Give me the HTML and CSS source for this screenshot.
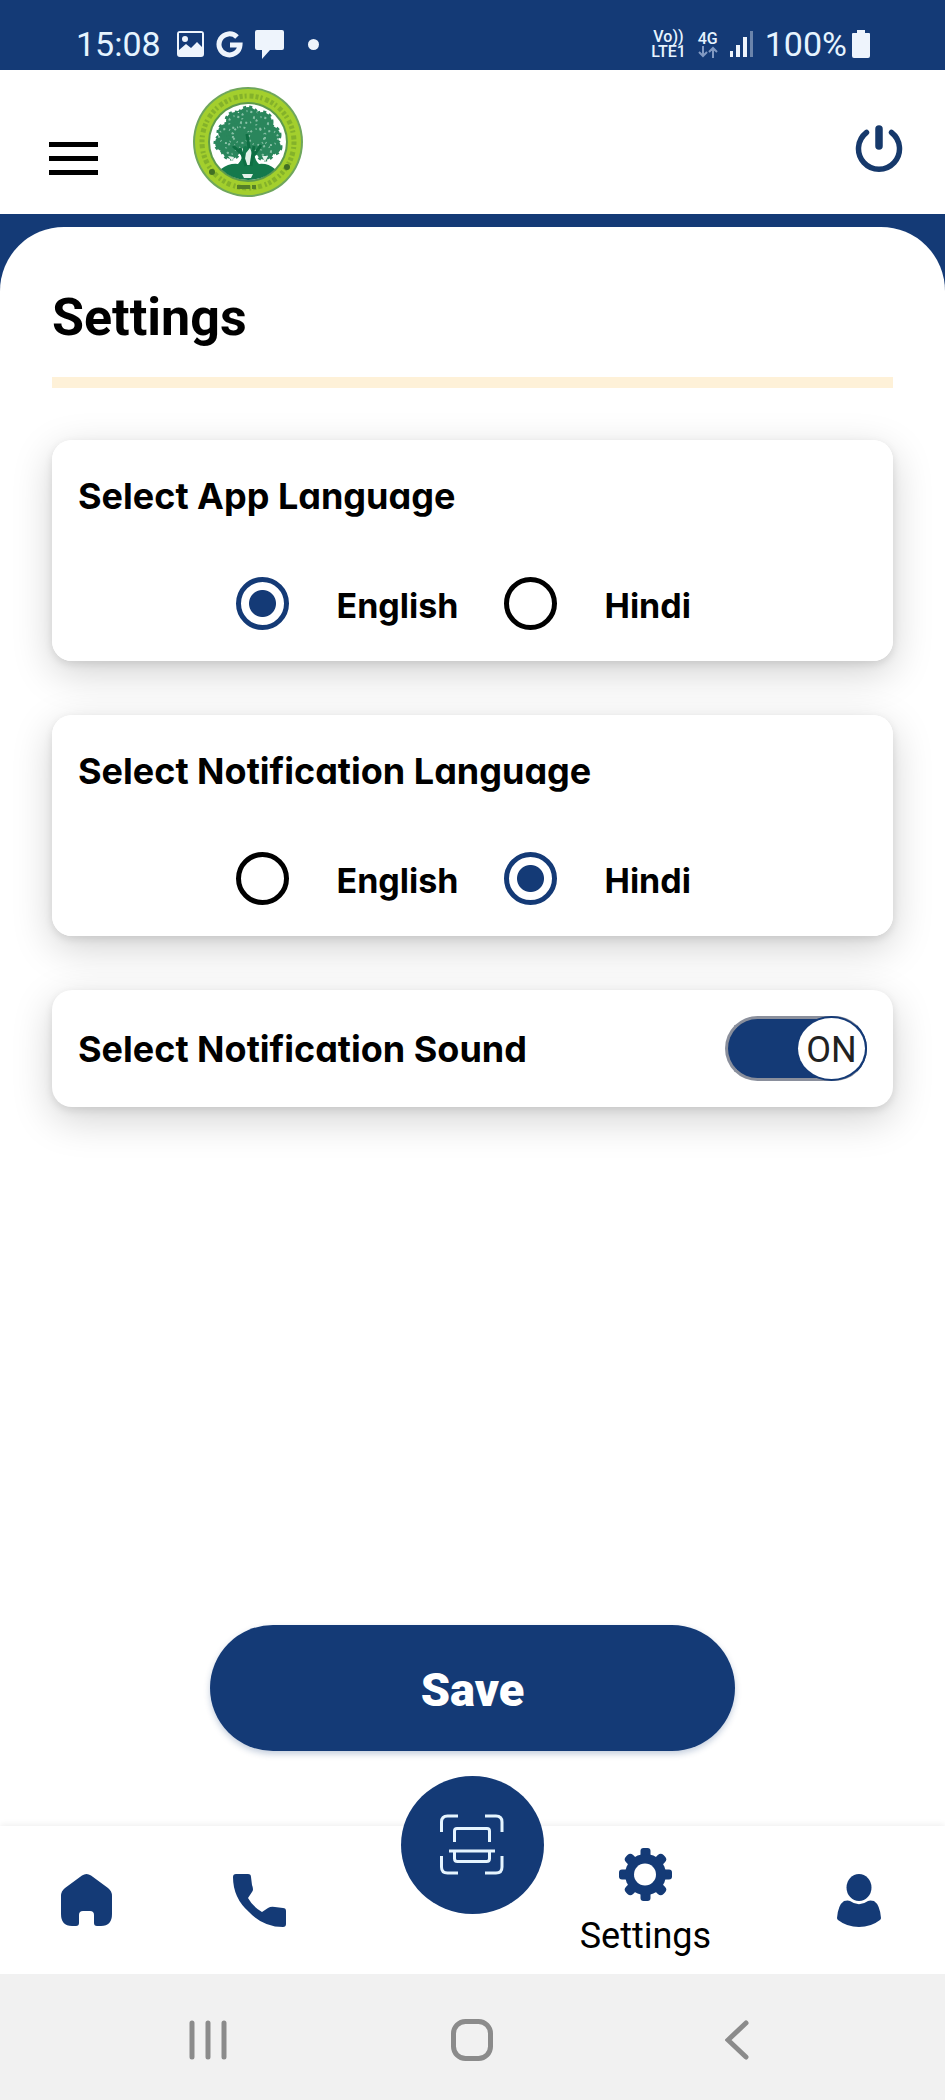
FILE: index.html
```html
<!DOCTYPE html>
<html lang="en">
<head>
    <meta charset="UTF-8">
    <meta name="viewport" content="width=device-width, initial-scale=1.0">
    <title>Settings</title>
    <link rel="stylesheet" href="styles.css">
</head>
<body>
    <div class="status-bar">
        <span class="clock">15:08</span>
        <svg class="status-icon" width="27" height="26" viewBox="0 0 27 26">
            <path fill-rule="evenodd" d="M3 0h21a3 3 0 0 1 3 3v20a3 3 0 0 1-3 3H3a3 3 0 0 1-3-3V3a3 3 0 0 1 3-3zM2 2v17l7-6 5 4 6-6 5 5V2zM8 5a3 3 0 1 1 0 6 3 3 0 0 1 0-6z"/>
        </svg>
        <svg class="status-icon" width="27" height="27" viewBox="0 0 27 27">
            <path d="M21 6A10.500 10.500 0 1 0 24 14H14" fill="none" stroke="#eef4fc" stroke-width="5"/>
        </svg>
        <svg class="status-icon" width="29" height="29" viewBox="0 0 29 29">
            <path d="M2 0h25a2 2 0 0 1 2 2v16a2 2 0 0 1-2 2H15l-8 9v-9H2a2 2 0 0 1-2-2V2a2 2 0 0 1 2-2z"/>
        </svg>
        <span class="more-dot"></span>
        <span class="network"><span>Vo))</span><span>LTE1</span></span>
        <span class="network">
            <span>4G</span>
            <svg width="20" height="12" viewBox="0 0 20 12">
                <path d="M5 0v10M1 6l4 4 4-4M15 12V2M11 6l4-4 4 4" fill="none" stroke="#8199c2" stroke-width="2"/>
            </svg>
        </span>
        <svg class="status-icon" width="23" height="26" viewBox="0 0 23 26">
            <path d="M0 20h3v6H0zM6 14h4v12H6zM13 6h4v20h-4z"/>
            <path d="M20 0h3v26h-3z" opacity=".4"/>
        </svg>
        <span class="battery">
            <span>100%</span>
            <svg class="status-icon" width="18" height="28" viewBox="0 0 18 28">
                <path d="M5 0h8v3h4a1 1 0 0 1 1 1v22a2 2 0 0 1-2 2H2a2 2 0 0 1-2-2V4a1 1 0 0 1 1-1h4z"/>
            </svg>
        </span>
    </div>

    <header class="app-header">
        <button class="menu-button" type="button" aria-label="Menu">
            <span></span>
            <span></span>
            <span></span>
        </button>
        <svg class="logo" width="112" height="112" viewBox="0 0 112 112">
            <circle cx="56" cy="56" r="55" fill="#6fa65c"/>
            <circle cx="56" cy="56" r="53" fill="#a3cf2d"/>
            <circle cx="56" cy="56" r="46" fill="none" stroke="#6f9f28" stroke-width="5" stroke-dasharray="3 2 2 3 4 2" opacity=".6"/>
            <circle cx="56" cy="56" r="40" fill="#5d9a4c"/>
            <circle cx="56" cy="56" r="38" fill="#fff"/>
            <path d="M29 83q8-6 17-5 5-4 5-18h10q1 14 6 18 9-1 16 5-11 11-27 11t-27-11z" fill="#14794c"/>
            <g fill="#2a865c" stroke="#2a865c" stroke-width="3" stroke-dasharray="3 3">
                <circle cx="56" cy="31" r="10"/>
                <circle cx="43" cy="35" r="9"/>
                <circle cx="70" cy="36" r="10"/>
                <circle cx="34" cy="46" r="8"/>
                <circle cx="79" cy="49" r="9"/>
                <circle cx="49" cy="48" r="13"/>
                <circle cx="66" cy="51" r="13"/>
                <circle cx="31" cy="57" r="8"/>
                <circle cx="82" cy="61" r="7"/>
                <circle cx="39" cy="64" r="9"/>
                <circle cx="73" cy="65" r="9"/>
            </g>
            <g fill="none" stroke="#9fcfb8" stroke-width="2" stroke-dasharray="2 4 1 3" opacity=".8">
                <circle cx="56" cy="31" r="6"/>
                <circle cx="43" cy="36" r="6"/>
                <circle cx="70" cy="37" r="6"/>
                <circle cx="34" cy="50" r="7"/>
                <circle cx="79" cy="52" r="7"/>
                <circle cx="49" cy="49" r="8"/>
                <circle cx="65" cy="51" r="8"/>
                <circle cx="39" cy="63" r="5"/>
                <circle cx="74" cy="65" r="5"/>
            </g>
            <path d="M52 79l2-12 4-5 3 8-2 9zM50 88h11l-2 4h-7zM36 70l4 5 2-4M70 70l3 6 3-6" fill="#e3f1e9"/>
            <path d="M54 80l-6-18M59 80l3-20M60 72l9-13M52 70l-11-10M57 62l-2-14" stroke="#0e6e43" stroke-width="3" fill="none"/>
            <circle cx="20" cy="86" r="3" fill="#416f24"/>
            <circle cx="95" cy="81" r="3" fill="#416f24"/>
            <path d="M45 101h13M60 101h4" stroke="#557f28" stroke-width="4"/>
        </svg>
        <button class="power-button" type="button" aria-label="Log out">
            <svg width="48" height="48" viewBox="0 0 48 48">
                <path d="M11.500 8.500A20.500 20.500 0 1 0 36.500 8.500" fill="none" stroke="#16396b" stroke-width="5.500" stroke-linecap="round"/>
                <path d="M24 5v17" stroke="#16396b" stroke-width="7.500" stroke-linecap="round"/>
            </svg>
        </button>
    </header>

    <div class="page">
        <main class="panel">
            <h1>Settings</h1>

            <form class="settings-form">
                <fieldset class="card">
                    <legend>Select App Language</legend>
                    <div class="options">
                        <input type="radio" id="appEnglish" name="appLanguage" checked>
                        <label for="appEnglish">English</label>
                        <input type="radio" id="appHindi" name="appLanguage">
                        <label for="appHindi">Hindi</label>
                    </div>
                </fieldset>

                <fieldset class="card">
                    <legend>Select Notification Language</legend>
                    <div class="options">
                        <input type="radio" id="notifEnglish" name="notifLanguage">
                        <label for="notifEnglish">English</label>
                        <input type="radio" id="notifHindi" name="notifLanguage" checked>
                        <label for="notifHindi">Hindi</label>
                    </div>
                </fieldset>

                <div class="card sound-card">
                    <label for="sound">Select Notification Sound</label>
                    <span class="switch">
                        <input type="checkbox" id="sound" checked>
                        <span class="knob">ON</span>
                    </span>
                </div>

                <button class="save-button" type="submit">Save</button>
            </form>
        </main>
    </div>

    <nav class="tab-bar">
        <a class="tab" href="#home" aria-label="Home">
            <svg width="53" height="53" viewBox="0 0 53 53">
                <path d="M22 1.500q4.500-3 9 0L48 14q4 3 4 8v18q0 12-11 12h-4q-3 0-3-3v-8q0-4-4-4h-7q-4 0-4 4v8q0 3-3 3h-4Q1 52 1 40V22q0-5 4-8z"/>
            </svg>
        </a>
        <a class="tab" href="#call" aria-label="Call">
            <svg width="53" height="53" viewBox="0 0 53 53">
                <path d="M3 0h12q3 0 3 3l1 8q2 5 0 7l-4 6q5 9 14 14l6-4q3-2 7-1l8 1q3 0 3 3v13q0 3-3 3Q30 53 16 38 0 24 0 3q0-3 3-3z"/>
            </svg>
        </a>
        <a class="tab scan-tab" href="#scan" aria-label="Scan">
            <span class="scan-circle">
                <svg width="64" height="62" viewBox="0 0 64 62">
                    <path d="M1.500 18V8q0-6 6-6H18M45 2h11q6 0 6 6v10M62 42v11q0 6-6 6H45M18 59H7.500q-6 0-6-6V42M14.500 28V17q0-2.500 2.500-2.500h30q2.500 0 2.500 2.500v11M9 37h46M14.500 37v7.500q0 3 3 3h29q3 0 3-3V37" fill="none" stroke="#e6f5ff" stroke-width="3"/>
                </svg>
            </span>
        </a>
        <a class="tab active" href="#settings">
            <svg width="53" height="53" viewBox="0 0 53 53">
                <rect x="21.500" y="0" width="10" height="53" rx="3"/>
                <rect x="0" y="21.500" width="53" height="10" rx="3"/>
                <rect x="21.500" y="0" width="10" height="53" rx="4" transform="rotate(45 26.500 26.500)"/>
                <rect x="21.500" y="0" width="10" height="53" rx="4" transform="rotate(-45 26.500 26.500)"/>
                <circle cx="26.500" cy="26.500" r="20.500"/>
                <circle cx="26" cy="26.500" r="11" fill="#fff"/>
            </svg>
            <span>Settings</span>
        </a>
        <a class="tab profile-tab" href="#profile" aria-label="Profile">
            <svg width="44" height="53" viewBox="0 0 44 53">
                <ellipse cx="22" cy="13.500" rx="12.500" ry="13.500"/>
                <path d="M7 27q4-1 6 0 9 6.500 18 0 2-1 6 0 6 4 7 17 0 1-1 2-9 7-21 7T1 46q-1-1-1-2Q1 31 7 27z"/>
            </svg>
        </a>
    </nav>

    <div class="system-bar">
        <button type="button" aria-label="Recent apps">
            <svg width="40" height="40" viewBox="0 0 40 40">
                <path d="M4 3v34M20 3v34M36 3v34"/>
            </svg>
        </button>
        <button type="button" aria-label="Home screen">
            <svg width="42" height="42" viewBox="0 0 42 42">
                <rect x="2.500" y="2.500" width="37" height="37" rx="12"/>
            </svg>
        </button>
        <button type="button" aria-label="Back">
            <svg width="24" height="40" viewBox="0 0 24 40">
                <path d="M21 3L3 20l18 17"/>
            </svg>
        </button>
    </div>
</body>
</html>
```
FILE: styles.css
```css
* {
    box-sizing: border-box;
}

body {
    font-family: Roboto, sans-serif;
    color: #000;
    background: #fff;
    margin: 0;
    min-height: 100vh;
    display: flex;
    flex-direction: column;
}

button {
    font-family: inherit;
    background: none;
    border: none;
    padding: 0;
    cursor: pointer;
}

svg {
    display: block;
}

/* status bar */

.status-bar {
    display: flex;
    align-items: center;
    gap: 12px;
    height: 70px;
    padding: 18px 75px 0 76px;
    background: #143a76;
    color: #e6f4ff;
    font-size: 34px;
    line-height: 36px;
}

.clock {
    margin-right: 4px;
}

.status-icon {
    fill: #eef4fc;
}

.more-dot {
    width: 11px;
    height: 11px;
    margin: 0 auto 0 12px;
    border-radius: 50%;
    background: #eef4fc;
}

.network {
    display: flex;
    flex-direction: column;
    align-items: center;
    font-size: 16px;
    font-weight: 500;
    line-height: 15px;
}

.battery {
    display: flex;
    align-items: center;
    gap: 5px;
}

/* header */

.app-header {
    display: flex;
    align-items: center;
    height: 144px;
    padding: 0 42px 0 49px;
    background: #fff;
}

.menu-button {
    display: flex;
    flex-direction: column;
    gap: 9px;
    width: 49px;
    padding-top: 32px;
}

.menu-button span {
    height: 5px;
    background: #000;
}

.logo {
    margin: 0 0 0 94px;
}

.power-button {
    margin-left: auto;
    padding-top: 12px;
}

/* content */

.page {
    display: flex;
    flex: 1;
    padding-top: 13px;
    background: linear-gradient(#143a76 120px, #fff 120px);
}

.panel {
    display: flex;
    flex-direction: column;
    flex: 1;
    padding: 56px 52px 75px;
    border-radius: 64px 64px 0 0;
    background: #fff;
}

h1 {
    margin: 0 0 52px;
    padding-bottom: 24px;
    border-bottom: 11px solid #fef1d8;
    font-size: 52px;
    line-height: 70px;
}

.settings-form {
    display: flex;
    flex-direction: column;
    gap: 54px;
    flex: 1;
}

.card {
    margin: 0;
    padding: 32px 26px;
    border: none;
    border-radius: 20px;
    background: #fff;
    box-shadow: 0 12px 40px rgba(0, 0, 0, 0.18), 0 3px 8px rgba(0, 0, 0, 0.1);
    font-family: Inter, sans-serif;
    font-feature-settings: "cv11";
    font-size: 36px;
    font-weight: 700;
    line-height: 48px;
}

.card legend {
    float: left;
    width: 100%;
    margin-bottom: 56px;
    padding: 0;
}

.options {
    display: grid;
    grid-template-columns: 53px 119px 53px 105px;
    justify-content: center;
    align-items: center;
    column-gap: 48px;
    clear: both;
    height: 53px;
    font-size: 34px;
}

.options input {
    appearance: none;
    width: 53px;
    height: 53px;
    margin: 0;
    border: 5px solid #000;
    border-radius: 50%;
}

.options input:checked {
    border-color: #143a76;
    background: radial-gradient(#143a76 13px, #fff 14px);
}

.options label {
    padding-top: 6px;
}

.sound-card {
    display: flex;
    align-items: center;
    justify-content: space-between;
    padding: 26px;
}

.switch {
    display: grid;
    width: 142px;
    height: 65px;
}

.switch input,
.knob {
    grid-area: 1 / 1;
}

.switch input {
    appearance: none;
    margin: 0;
    border: 3px solid #8a8f9c;
    border-right-color: #143a76;
    border-radius: 33px;
    background: #143a76;
}

.knob {
    justify-self: end;
    align-self: center;
    width: 67px;
    height: 61px;
    margin-right: 2px;
    border-radius: 50%;
    background: #fff;
    box-shadow: 0 0 0 2px #143a76;
    color: #222;
    font-family: Roboto, sans-serif;
    font-size: 36px;
    font-weight: 400;
    line-height: 64px;
    text-align: center;
    pointer-events: none;
}

.save-button {
    align-self: center;
    width: 62.5%;
    height: 126px;
    margin-top: auto;
    padding-top: 2px;
    border-radius: 63px;
    background: #143a76;
    box-shadow: 0 3px 6px rgba(20, 58, 118, 0.25);
    color: #fff;
    font-size: 47px;
    font-weight: 900;
}

/* bottom tabs */

.tab-bar {
    display: flex;
    height: 148px;
    background: #fff;
    box-shadow: 0 -2px 6px rgba(0, 0, 0, 0.06);
}

.tab {
    display: flex;
    flex-direction: column;
    align-items: center;
    width: 18.3%;
    padding-top: 48px;
    color: #000;
    font-size: 36px;
    line-height: 42px;
    text-decoration: none;
}

.tab svg {
    fill: #143a76;
}

.tab.active {
    gap: 14px;
    padding-top: 22px;
}

.scan-tab,
.profile-tab {
    margin-left: auto;
}

.scan-tab {
    padding-top: 0;
}

.scan-circle {
    display: flex;
    align-items: center;
    justify-content: center;
    width: 143px;
    height: 138px;
    margin-top: -50px;
    border-radius: 50%;
    background: #143a76;
}

/* system navigation */

.system-bar {
    display: grid;
    grid-template-columns: repeat(3, 1fr);
    align-items: center;
    justify-items: center;
    height: 126px;
    padding: 6px 8% 0;
    background: #f1f1f1;
}

.system-bar svg {
    fill: none;
    stroke: #8b8b8b;
    stroke-width: 5px;
    stroke-linecap: round;
}
```
